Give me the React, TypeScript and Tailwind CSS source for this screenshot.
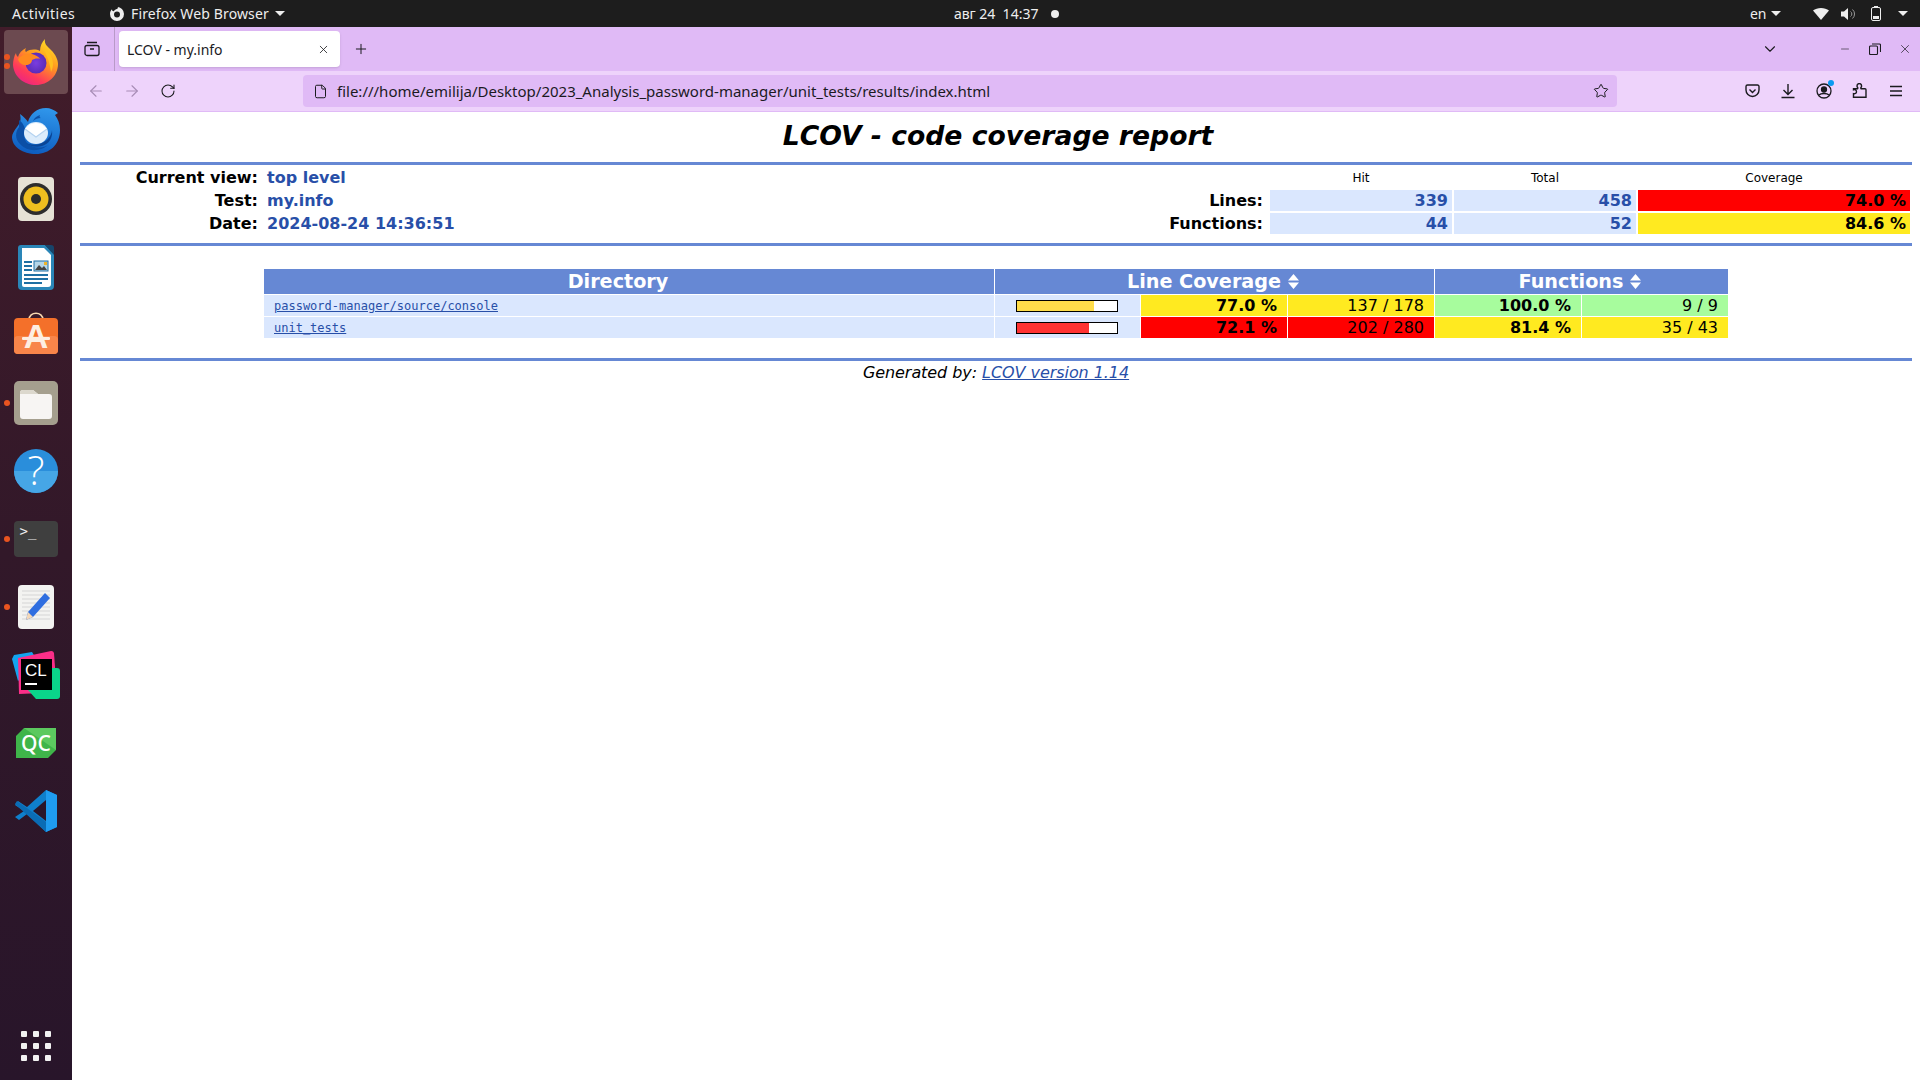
import React from "react";
import { ArrowLeft, ArrowRight, RotateCw, File, Star, X, Plus, ChevronDown, Minus } from "lucide-react";

const Firefox = () => (
  <svg width="48" height="48" viewBox="0 0 48 48">
    <defs>
      <linearGradient id="ffa" x1="0.8" y1="0" x2="0.2" y2="1"><stop offset="0" stopColor="#ffe226" /><stop offset="0.4" stopColor="#ff9a1f" /><stop offset="0.75" stopColor="#ff3a5a" /><stop offset="1" stopColor="#e8208a" /></linearGradient>
      <radialGradient id="ffb" cx="0.5" cy="0.5" r="0.5"><stop offset="0" stopColor="#7a3de0" /><stop offset="1" stopColor="#5b2bb8" /></radialGradient>
    </defs>
    <path d="M33 1c-1 5 2 7 6 11 5 5 7 10 7 14 0 12-10 21-22 21C12 47 2 39 1 27c0-4 1-9 3-12 0 2 1 3 2 4 1-4 4-7 8-9-1 2-1 3 0 4 4-3 10-3 14-1 0-5 2-9 5-12z" fill="url(#ffa)" />
    <circle cx="24" cy="25" r="10.5" fill="url(#ffb)" />
    <path d="M6 21c3-4 9-6 14-5 4 1 7 3 8 5-3-1-6 0-8 1 0 3-3 5-6 5-4 0-7-2-8-6z" fill="#ff8a1f" />
    <path d="M30 8c5 3 11 10 11 18 0 3-1 6-2 8-1-10-5-19-9-26z" fill="#ffc01f" />
  </svg>
);
const Thunderbird = () => (
  <svg width="48" height="46" viewBox="0 0 48 46">
    <defs><linearGradient id="tb" x1="0.6" y1="0" x2="0.4" y2="1"><stop offset="0" stopColor="#2f95ea" /><stop offset="1" stopColor="#0d5cc0" /></linearGradient></defs>
    <path d="M8 6c1 5 1 8-3 13C2 23 0 26 0 29c0 10 11 17 24 17s24-9 24-24c0-6-2-11-5-15l3-2c-3-3-8-5-12-5-9 0-16 6-18 14-2-3-5-6-8-8z" fill="url(#tb)" />
    <path d="M7 12c3 2 5 5 6 9-2 5-1 11 3 15 5 4 13 5 20 1-6 6-20 8-28-1C3 31 3 24 7 19z" fill="#0b4fa6" />
    <path d="M21 13c1-3 4-5 7-6-1 2 0 3 1 3-3 0-6 1-8 3z" fill="#0b4fa6" />
    <ellipse cx="24" cy="25" rx="12" ry="11" fill="#dcecfb" />
    <path d="M13 21c3-4 7-6 11-6s8 2 11 6l-11 8z" fill="#fff" />
    <path d="M13 21l11 8 11-8" fill="none" stroke="#b5d3f0" strokeWidth="1.2" />
    <path d="M14 35c7 3 15 2 21-3 3-3 5-7 5-10 1 8-3 14-10 16-6 2-12 0-16-3z" fill="#0a4596" />
  </svg>
);
const Rhythmbox = () => (
  <svg width="36" height="44" viewBox="0 0 36 44">
    <rect width="36" height="44" rx="4" fill="#e6e2d6" />
    <circle cx="18" cy="22" r="16" fill="#2d2d2d" />
    <circle cx="18" cy="22" r="12.5" fill="#efbf1f" />
    <circle cx="18" cy="22" r="5" fill="#2b2b2b" />
  </svg>
);
const Writer = () => (
  <svg width="36" height="45" viewBox="0 0 36 45">
    <path d="M3 0h24l9 9v32a4 4 0 0 1-4 4H4a4 4 0 0 1-4-4V3a3 3 0 0 1 3-3z" fill="#2a86b8" />
    <path d="M4 3h22l7 7v29a3 3 0 0 1-3 3H6a2 2 0 0 1-2-2z" fill="#fff" />
    <path d="M27 0h6a3 3 0 0 1 3 3v7z" fill="#17456b" />
    <rect x="6" y="16" width="8" height="2" fill="#1f6fa3" /><rect x="6" y="20" width="8" height="2" fill="#1f6fa3" /><rect x="6" y="24" width="8" height="2" fill="#1f6fa3" />
    <rect x="6" y="29" width="24" height="2" fill="#1f6fa3" /><rect x="6" y="33" width="24" height="2" fill="#1f6fa3" /><rect x="6" y="37" width="18" height="2" fill="#1f6fa3" />
    <rect x="16" y="16" width="14" height="10" fill="#b5d6e8" stroke="#1f6fa3" />
    <path d="M17 25l4-5 3 3 2-2 3 4z" fill="#444" /><rect x="26" y="17" width="3" height="3" fill="#f0b429" />
  </svg>
);
const Software = () => (
  <svg className="-mx-[10px] -mb-[10px] -mt-[20px]" width="64" height="63" viewBox="-10 -13 64 63">
    <path d="M15 8c0-9 14-9 14 0" fill="none" stroke="#f8d8b0" strokeWidth="1.6" />
    <rect y="6" width="44" height="36" rx="4" fill="#f4702a" />
    <rect y="24" width="44" height="18" rx="4" fill="#f8854a" />
    <text x="22" y="36" textAnchor="middle" fontFamily="Liberation Sans, sans-serif" fontWeight="700" fontSize="34" fill="#fdeee2">A</text>
    <rect x="8" y="25" width="28" height="3" rx="1" fill="#fdeee2" />
  </svg>
);
const Files = () => (
  <svg width="44" height="44" viewBox="0 0 44 44">
    <rect width="44" height="44" rx="5" fill="#a59f8e" />
    <path d="M6 12a3 3 0 0 1 3-3h10l5 4h11a3 3 0 0 1 3 3v19a3 3 0 0 1-3 3H9a3 3 0 0 1-3-3z" fill="#f7f5f3" />
    <path d="M6 12a3 3 0 0 1 3-3h10l5 4H6z" fill="#dcd8cd" />
  </svg>
);
const Help = () => (
  <svg className="-m-[10px]" width="64" height="64" viewBox="-10 -10 64 64">
    <circle cx="22" cy="22" r="22" fill="#2a8edb" />
    <path d="M0 22h44a22 22 0 0 1-44 0z" fill="#46a6e6" />
    <text x="22" y="36" textAnchor="middle" fontFamily="Open Sans, sans-serif" fontWeight="300" fontSize="40" fill="#fff">?</text>
  </svg>
);
const Terminal = () => (
  <svg width="44" height="36" viewBox="0 0 44 36">
    <rect width="44" height="36" rx="4" fill="#3f3f3f" />
    <text x="5.5" y="15" fontFamily="DejaVu Sans Mono, monospace" fontSize="14" fill="#eee">&gt;_</text>
  </svg>
);
const Editor = () => (
  <svg width="36" height="44" viewBox="0 0 36 44">
    <rect width="36" height="44" rx="4" fill="#f3f3f1" />
    <path d="M4 6h28M4 10h28M4 14h28M4 18h28M4 22h28M4 26h28M4 30h28M4 34h28" stroke="#d5d5d5" />
    <path d="M27 8l5 5-17 19-7 3 2-8z" fill="#2f6ee0" />
    <path d="M10 27l5 5-7 3z" fill="#f4d8b8" />
  </svg>
);
const CLion = () => (
  <svg width="48" height="48" viewBox="0 0 48 48">
    <path d="M2 4L20 1l6 10L6 30 0 8z" fill="#12a4f0" />
    <path d="M6 7l33-7a3 3 0 0 1 3 2l2 28-14 12-23 1z" fill="#fb2e88" />
    <path d="M28 26l12-9 5 0a3 3 0 0 1 3 3v25a3 3 0 0 1-3 3H24l-8-9z" fill="#0ad58a" />
    <rect x="9" y="8" width="31" height="31" fill="#000" />
    <text x="13" y="25" fontFamily="Liberation Sans, sans-serif" fontSize="17" fill="#fff">CL</text>
    <rect x="13" y="32" width="12" height="2" fill="#fff" />
  </svg>
);
const Qc = () => (
  <svg width="40" height="30" viewBox="0 0 40 30">
    <path d="M8 0h32v22l-8 8H0V8z" fill="#3fb54a" />
    <path d="M8 0h32v22z" fill="#5cc95f" />
    <text x="20" y="23" textAnchor="middle" fontFamily="Noto Sans, sans-serif" fontWeight="500" fontSize="21" fill="#fff">QC</text>
  </svg>
);
const VsCode = () => (
  <svg width="44" height="44" viewBox="0 0 44 44">
    <path d="M32 1l11 5v32l-11 5-19-18-8 6-4-3 9-6-9-6 3-4 9 6z" fill="#0f7fcc" />
    <path d="M3 12L1 15l31 28 0-10z" fill="#0a6cb5" />
    <path d="M32 1l11 5v32l-11 5z" fill="#1f9cf0" />
    <path d="M32 11L19 22l13 10z" fill="#2a1529" />
  </svg>
);

const Dock = ({ children, h, dots, active }: { children: React.ReactNode; h: string; dots?: number; active?: boolean }) => (
  <div className={`${h} relative flex shrink-0 items-center justify-center`}>
    {active && <div className="absolute left-[4px] top-[3px] h-[64px] w-[64px] rounded-[4px] bg-[#6c4a50]" />}
    <div className="relative flex">{children}</div>
    {dots === 1 && <div className="absolute left-[4px] top-1/2 -mt-[3px] h-[6px] w-[6px] rounded-full bg-[#e95420]" />}
    {dots === 2 && (
      <div className="absolute left-[4px] top-[27px] flex flex-col gap-[3px]">
        <div className="h-[6px] w-[6px] rounded-full bg-[#e95420]" />
        <div className="h-[6px] w-[6px] rounded-full bg-[#e95420]" />
      </div>
    )}
  </div>
);

const Sidebar = () => (
  <div className="flex h-full w-[72px] shrink-0 flex-col bg-gradient-to-b from-[#421c2a] via-[#321829] to-[#28152a]">
    <Dock h="h-[70px]" dots={2} active><Firefox /></Dock>
    <Dock h="h-[68px]"><Thunderbird /></Dock>
    <Dock h="h-[68px]"><Rhythmbox /></Dock>
    <Dock h="h-[68px]"><Writer /></Dock>
    <Dock h="h-[68px]"><Software /></Dock>
    <Dock h="h-[68px]" dots={1}><Files /></Dock>
    <Dock h="h-[68px]"><Help /></Dock>
    <Dock h="h-[68px]" dots={1}><Terminal /></Dock>
    <Dock h="h-[68px]" dots={1}><Editor /></Dock>
    <Dock h="h-[68px]"><CLion /></Dock>
    <Dock h="h-[68px]"><Qc /></Dock>
    <Dock h="h-[68px]"><VsCode /></Dock>
    <div className="mt-auto mb-[19px] ml-[21px] grid w-[30px] grid-cols-3 gap-[6px]">
      {[0, 1, 2, 3, 4, 5, 6, 7, 8].map((i) => (
        <div key={i} className="h-[6px] w-[6px] rounded-[1px] bg-[#f2f2f2]" />
      ))}
    </div>
  </div>
);

const Caret = () => (
  <svg width="10" height="5" viewBox="0 0 10 5"><path d="M0 0h10L5 5z" fill="#eee" /></svg>
);

const TopBar = () => (
  <div className="flex h-[27px] shrink-0 items-center bg-[#1d1d1d] font-['Noto_Sans',sans-serif] text-[14px] text-[#eeeeee]">
    <div className="ml-[12px] w-[97px] tracking-[0.5px]">Activities</div>
    <svg width="16" height="16" viewBox="0 0 16 16">
      <path d="M8 1a7 7 0 1 1-7 7c0-2 .8-3.5 2-4.7C3 5 4 5.5 5 5c1-1.5 2.3-2 3.5-2C8 2.5 9 1.5 10 .5 10 1 9 1 8 1z" fill="#eee" />
      <circle cx="8" cy="8.5" r="3" fill="#1d1d1d" />
    </svg>
    <div className="ml-[6px] tracking-[0.13px]">Firefox Web Browser</div>
    <div className="ml-[6px]"><Caret /></div>
    <div className="ml-[669px] w-[97px] whitespace-pre">авг 24  14:37</div>
    <div className="h-[8px] w-[8px] rounded-full bg-[#eee]" />
    <div className="ml-[691px]">en</div>
    <div className="ml-[5px]"><Caret /></div>
    <svg className="ml-[32px]" width="16" height="12" viewBox="0 0 16 12"><path d="M0 2.5C2 1 5 0 8 0s6 1 8 2.5L8 12z" fill="#eee" /></svg>
    <svg className="ml-[12px]" width="15" height="14" viewBox="0 0 15 14"><path d="M0 4.5h3L7 1v12L3 9.5H0z" fill="#eee" /><path d="M9.5 4.5a3 3 0 0 1 0 5M11.5 2.5a6 6 0 0 1 0 9" stroke="#999" fill="none" /></svg>
    <svg className="ml-[15px]" width="10" height="15" viewBox="0 0 10 15"><rect x=".5" y="1.5" width="9" height="13" rx="1.5" fill="none" stroke="#eee" /><rect x="3" y="0" width="4" height="1.5" fill="#eee" /><rect x="2" y="10" width="6" height="3" fill="#eee" /></svg>
    <div className="ml-[17px]"><Caret /></div>
  </div>
);

const TabBar = () => (
  <div className="flex h-[44px] shrink-0 items-center bg-[#e0baf6] text-[#1b1b1f]">
    <svg className="ml-[12px]" width="16" height="16" viewBox="0 0 16 16" fill="none" stroke="#1b1b1f" strokeWidth="1.3"><rect x="1" y="4.5" width="14" height="10" rx="2" /><path d="M3 1.5h10M6 8h4" /></svg>
    <div className="ml-[14px] h-[44px] w-px bg-[#b89ac8]" />
    <div className="ml-[4px] flex h-[36px] w-[221px] items-center justify-between rounded-[4px] bg-white pl-[8px] pr-[10px] font-['Noto_Sans',sans-serif] text-[14px] shadow-sm">
      <span>LCOV - my.info</span>
      <X size={13} strokeWidth={1.5} />
    </div>
    <Plus className="ml-[13px]" size={16} strokeWidth={1.5} />
    <ChevronDown className="ml-[1392px]" size={18} strokeWidth={1.5} />
    <Minus className="ml-[60px]" size={12} strokeWidth={1.2} />
    <svg className="ml-[18px]" width="12" height="12" viewBox="0 0 12 12" fill="none" stroke="#1b1b1f" strokeWidth="1.1"><rect x=".5" y="3" width="8" height="8.5" rx="1" /><path d="M3 1h7.5a1 1 0 0 1 1 1v7" /></svg>
    <X className="ml-[17px]" size={14} strokeWidth={1.2} />
  </div>
);

const ToolBar = () => (
  <div className="flex h-[41px] shrink-0 items-center border-b border-[#e0baf6] bg-[#eed3fb] text-[#1b1b1f]">
    <ArrowLeft className="ml-[15px] text-[#a78cb5]" size={18} strokeWidth={1.5} />
    <ArrowRight className="ml-[18px] text-[#a78cb5]" size={18} strokeWidth={1.5} />
    <RotateCw className="ml-[19px]" size={16} strokeWidth={1.6} />
    <div className="ml-[127px] flex h-[32px] w-[1314px] items-center rounded-[4px] bg-[#e0baf6] pl-[10px] pr-[8px] font-['Noto_Sans',sans-serif] text-[15px]">
      <File size={15} strokeWidth={1.6} />
      <span className="ml-[9px]">file:///home/emilija/Desktop/2023_Analysis_password-manager/unit_tests/results/index.html</span>
      <Star className="ml-auto" size={16} strokeWidth={1.5} />
    </div>
    <svg className="ml-[128px]" width="15" height="14" viewBox="0 0 15 14" fill="none" stroke="#1b1b1f" strokeWidth="1.4"><path d="M1 2.5a1.5 1.5 0 0 1 1.5-1.5h10A1.5 1.5 0 0 1 14 2.5V6a6.5 6.5 0 0 1-13 0z" /><path d="M4.5 5.5L7.5 8.5l3-3" /></svg>
    <svg className="ml-[20px]" width="16" height="16" viewBox="0 0 16 16" fill="none" stroke="#1b1b1f" strokeWidth="1.4"><path d="M8 1v10M3.5 7L8 11.5 12.5 7M1.5 14.5h13" /></svg>
    <div className="relative ml-[20px]">
      <svg width="16" height="16" viewBox="0 0 16 16" fill="none" stroke="#1b1b1f" strokeWidth="1.3"><circle cx="8" cy="8" r="7" /><circle cx="8" cy="6.5" r="2.5" fill="#1b1b1f" /><path d="M3 12c2-2 8-2 10 0" /></svg>
      <div className="absolute -right-[2px] -top-[3px] h-[6px] w-[6px] rounded-full bg-[#0a9af0]" />
    </div>
    <svg className="ml-[20px]" width="16" height="16" viewBox="0 0 16 16" fill="none" stroke="#1b1b1f" strokeWidth="1.4"><path d="M1.5 6h3.5c.8 0 1-.7.6-1.3-.4-.6-.6-1-.6-1.6a2.3 2.3 0 0 1 4.6 0c0 .6-.2 1-.6 1.6-.4.6-.2 1.3.6 1.3H13a1 1 0 0 1 1 1v7.5H1.5v-3.7c1.2.4 3-.2 3-1.9s-1.8-2.3-3-1.9z" transform="translate(0 -0.2)" /></svg>
    <svg className="ml-[20px]" width="16" height="16" viewBox="0 0 16 16" fill="none" stroke="#1b1b1f" strokeWidth="1.4"><path d="M2 3.5h12M2 8h12M2 12.5h12" /></svg>
  </div>
);

const Hr = ({ className = "" }: { className?: string }) => <div className={`h-[3px] bg-[#6688d4] ${className}`} />;

const Cell = ({ bg, bold, children }: { bg: string; bold?: boolean; children: React.ReactNode }) => (
  <div className={`${bg} ${bold ? "font-bold" : ""} flex h-[21px] items-center justify-end pr-[10px] text-[16px] leading-[21px] text-black`}>{children}</div>
);

const SortHead = ({ label, span }: { label: string; span: string }) => (
  <div className={`${span} flex items-center justify-center gap-[7px] pr-[3px] text-[19.2px] font-bold text-white bg-[#6688d4]`}>
    <span className="pt-[1px]">{label}</span>
    <svg width="11" height="15" viewBox="0 0 11 15"><path d="M5.5 0L11 6.5H0zM5.5 15L0 8.5h11z" fill="#fff" /></svg>
  </div>
);

const Bar = ({ pct, color }: { pct: number; color: string }) => (
  <div className="flex h-[21px] items-center justify-center bg-[#dae7fe] pr-[2px]">
    <div className="h-[12px] w-[102px] border border-black bg-white">
      <div className={`h-full ${color}`} style={{ width: `${pct}%` }} />
    </div>
  </div>
);

const DirLink = ({ children }: { children: React.ReactNode }) => (
  <div className="flex h-[21px] items-center bg-[#dae7fe] pl-[10px] font-['DejaVu_Sans_Mono',monospace] text-[12px] text-[#284fa8] underline">{children}</div>
);

const Report = () => (
  <div className="flex flex-1 flex-col px-[8px] font-['DejaVu_Sans',sans-serif] text-black">
    <div className="flex h-[50px] items-center justify-center pb-[2px] pl-[4px] text-[26.67px] font-bold italic">LCOV - code coverage report</div>
    <Hr />
    <div className="flex h-[78px] justify-between pr-[2px] pt-[1px]">
      <div className="grid grid-cols-[178px_auto] auto-rows-[23px] items-center gap-x-[9px] self-start text-[16px] font-bold">
        <div className="text-right">Current view:</div><div className="text-[#284fa8]">top level</div>
        <div className="text-right">Test:</div><div className="text-[#284fa8]">my.info</div>
        <div className="text-right">Date:</div><div className="text-[#284fa8]">2024-08-24 14:36:51</div>
      </div>
      <div className="grid grid-cols-[auto_182px_182px_272px] grid-rows-[22px_21px_21px] items-center gap-x-[2px] gap-y-[2px] self-start text-[16px]">
        <div />
        <div className="pt-[2px] text-center text-[12px]">Hit</div>
        <div className="pt-[2px] text-center text-[12px]">Total</div>
        <div className="pt-[2px] text-center text-[12px]">Coverage</div>
        <div className="pr-[5px] text-right font-bold">Lines:</div>
        <div className="h-[21px] bg-[#dae7fe] pr-[4px] text-right font-bold leading-[21px] text-[#284fa8]">339</div>
        <div className="h-[21px] bg-[#dae7fe] pr-[4px] text-right font-bold leading-[21px] text-[#284fa8]">458</div>
        <div className="h-[21px] bg-[#ff0000] pr-[4px] text-right font-bold leading-[21px]">74.0 %</div>
        <div className="pr-[5px] text-right font-bold">Functions:</div>
        <div className="h-[21px] bg-[#dae7fe] pr-[4px] text-right font-bold leading-[21px] text-[#284fa8]">44</div>
        <div className="h-[21px] bg-[#dae7fe] pr-[4px] text-right font-bold leading-[21px] text-[#284fa8]">52</div>
        <div className="h-[21px] bg-[#ffea20] pr-[4px] text-right font-bold leading-[21px]">84.6 %</div>
      </div>
    </div>
    <Hr />
    <div className="ml-[184px] mt-[23px] grid w-[1464px] grid-cols-[730px_145px_146px_146px_146px_146px] grid-rows-[25px_21px_21px] gap-px">
      <div className="flex items-center justify-center bg-[#6688d4] pr-[22px] pt-[1px] text-[19.2px] font-bold text-white">Directory</div>
      <SortHead label="Line Coverage" span="col-span-3" />
      <SortHead label="Functions" span="col-span-2" />

      <DirLink>password-manager/source/console</DirLink>
      <Bar pct={77} color="bg-[#ffdd4a]" />
      <Cell bg="bg-[#ffea20]" bold>77.0 %</Cell>
      <Cell bg="bg-[#ffea20]">137 / 178</Cell>
      <Cell bg="bg-[#a7fc9d]" bold>100.0 %</Cell>
      <Cell bg="bg-[#a7fc9d]">9 / 9</Cell>

      <DirLink>unit_tests</DirLink>
      <Bar pct={72} color="bg-[#ff3333]" />
      <Cell bg="bg-[#ff0000]" bold>72.1 %</Cell>
      <Cell bg="bg-[#ff0000]">202 / 280</Cell>
      <Cell bg="bg-[#ffea20]" bold>81.4 %</Cell>
      <Cell bg="bg-[#ffea20]">35 / 43</Cell>
    </div>
    <Hr className="mt-[20px]" />
    <div className="mt-[1px] text-center text-[16px] italic leading-[21px] tracking-[-0.06px]">
      Generated by: <span className="text-[#284fa8] underline">LCOV version 1.14</span>
    </div>
  </div>
);

export default function App() {
  return (
    <div className="flex h-[1080px] w-[1920px] flex-col overflow-hidden bg-white">
      <TopBar />
      <div className="flex min-h-0 flex-1">
        <Sidebar />
        <div className="flex min-w-0 flex-1 flex-col">
          <TabBar />
          <ToolBar />
          <Report />
        </div>
      </div>
    </div>
  );
}
